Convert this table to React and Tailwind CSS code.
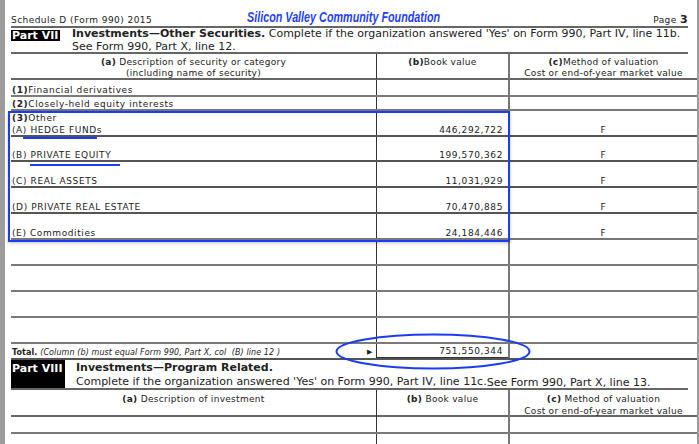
const Row = ({ h, line = 'border-b-2 border-[#7a7a7a]', a, b, c }) => (
  <div className={`grid grid-cols-[365px_132px_1fr] ${h} ${line}`}>
    <div className="flex items-end pl-[1px]">{a}</div>
    <div className="flex items-end justify-end pr-[5px] border-l border-[#333]">{b}</div>
    <div className="flex items-end justify-center border-l-2 border-[#777]">{c}</div>
  </div>
);

const other = [
  { label: '(B) PRIVATE EQUITY', value: '199,570,362', h: 'h-[25px]' },
  { label: '(C) REAL ASSETS', value: '11,031,929', h: 'h-[26px]' },
  { label: '(D) PRIVATE REAL ESTATE', value: '70,470,885', h: 'h-[26px]' },
  { label: '(E) Commodities', value: '24,184,446', h: 'h-[26px]' },
];

export default function App() {
  return (
    <div className="relative flex w-[699px] h-[444px] overflow-hidden bg-white font-['DejaVu_Sans',sans-serif] text-[#222]">
      <div className="w-[5px] shrink-0 bg-[#9c9c9c]" />

      <div className="flex-1 pl-[6px]">
        {/* page header */}
        <div className="mr-[9px] h-[28px] flex items-end border-b-2 border-[#666]">
          <span className="text-[9px] leading-[11px] tracking-[0.45px]">Schedule D (Form 990) 2015</span>
          <span className="ml-[95px] mb-[1px] inline-block origin-left scale-x-[0.77] font-['Liberation_Sans',Arial,sans-serif] text-[14px] leading-[16px] font-bold italic text-[#1f3ff0] whitespace-nowrap">
            Silicon Valley Community Foundation
          </span>
          <span className="ml-auto text-[9px] leading-[11px] tracking-[0.4px]">
            Page <b className="text-[11px]">3</b>
          </span>
        </div>

        {/* Part VII */}
        <div className="mr-[9px] h-[26px] flex border-b-2 border-[#666]">
          <div className="mt-[2px] w-[49px] h-[11px] shrink-0 bg-black text-white text-[11px] leading-[11px] font-bold pl-[1px]">
            Part VII
          </div>
          <div className="ml-[12px] text-[11px] leading-[12px] whitespace-nowrap">
            <div className="mb-[1px]">
              <b>Investments—Other Securities.</b> Complete if the organization answered 'Yes' on Form 990, Part IV, line 11b.
            </div>
            <div>See Form 990, Part X, line 12.</div>
          </div>
        </div>

        {/* table header */}
        <div className="grid grid-cols-[365px_132px_1fr] h-[26px] border-b-2 border-[#666] text-[9px] leading-[11px] tracking-[0.3px] text-center">
          <div className="pt-[3px]">
            <div><b>(a)</b> Description of security or category</div>
            <div>(including name of security)</div>
          </div>
          <div className="pt-[3px] border-l border-[#333]"><b>(b)</b>Book value</div>
          <div className="pt-[3px] border-l-2 border-[#777]">
            <div><b>(c)</b>Method of valuation</div>
            <div>Cost or end-of-year market value</div>
          </div>
        </div>

        <div className="text-[9px] leading-[9px] tracking-[0.6px]">
          <Row h="h-[17px]" a={<span><b>(1)</b>Financial derivatives</span>} />
          <Row h="h-[14px]" a={<span><b>(2)</b>Closely-held equity interests</span>} />
          <Row
            h="h-[26px]"
            line="border-b-2 border-[#555]"
            a={
              <div>
                <div className="mb-[3px]"><b>(3)</b>Other</div>
                <div>(A) HEDGE FUNDs</div>
              </div>
            }
            b="446,292,722"
            c="F"
          />
          {other.map((r, i) => (
            <Row
              key={r.label}
              h={r.h}
              line={i === other.length - 1 ? 'border-b-2 border-[#777]' : 'border-b-2 border-[#555]'}
              a={r.label}
              b={r.value}
              c="F"
            />
          ))}
          <Row h="h-[26px]" />
          <Row h="h-[26px]" />
          <Row h="h-[26px]" />
          <Row h="h-[26px]" />
          <div className="grid grid-cols-[365px_132px_1fr] h-[16px] border-b-2 border-[#555]">
            <div className="flex items-end justify-between pl-[1px] pr-[3px] pb-[1px]">
              <span className="text-[8px] tracking-[0.1px]">
                <b>Total.</b> <i>(Column (b) must equal Form 990, Part X, col&nbsp; (B) line 12 )</i>
              </span>
              <span className="text-[7px]">▶</span>
            </div>
            <div className="flex items-end justify-end pr-[5px] pb-[1px] border-l border-b border-[#333]">751,550,344</div>
            <div className="border-l-2 border-[#777]" />
          </div>
        </div>

        {/* Part VIII */}
        <div className="mr-[9px] h-[30px] flex border-b-2 border-[#666]">
          <div className="w-[54px] h-[28px] shrink-0 bg-black text-white text-[11px] leading-[14px] font-bold pl-[1px] pt-[2px]">
            Part VIII
          </div>
          <div className="ml-[11px] pt-[1px] text-[11px] leading-[14px] whitespace-nowrap">
            <div><b>Investments—Program Related.</b></div>
            <div>
              Complete if the organization answered 'Yes' on Form 990, Part IV, line 11c.
              <span className="align-[-1px]">See Form 990, Part X, line 13.</span>
            </div>
          </div>
        </div>

        <div className="grid grid-cols-[365px_132px_1fr] h-[27px] border-b-2 border-[#666] text-[9px] leading-[12px] tracking-[0.3px] text-center">
          <div className="pt-[3px]"><b>(a)</b> Description of investment</div>
          <div className="pt-[3px] border-l border-[#333]"><b>(b)</b> Book value</div>
          <div className="pt-[3px] border-l-2 border-[#777]">
            <div><b>(c)</b> Method of valuation</div>
            <div>Cost or end-of-year market value</div>
          </div>
        </div>
        <Row h="h-[17px]" />
        <Row h="h-[17px]" />
      </div>

      <div className="w-[2px] shrink-0 bg-[#9c9c9c]" />

      {/* annotations */}
      <div className="absolute left-[8px] top-[111px] w-[502px] h-[131px] border-2 border-[#1a3cf2] shadow-[0_1px_3px_rgba(0,0,0,0.25)]" />
      <div className="absolute left-[23px] top-[137px] w-[74px] h-[2px] bg-[#1a3cf2]" />
      <div className="absolute left-[30px] top-[164px] w-[90px] h-[2px] bg-[#1a3cf2]" />
      <svg className="absolute left-[334px] top-[333px]" width="198" height="37" viewBox="0 0 198 37">
        <ellipse cx="99" cy="18.5" rx="96.5" ry="17" fill="none" stroke="#1a3cf2" strokeWidth="2" />
      </svg>
    </div>
  );
}
